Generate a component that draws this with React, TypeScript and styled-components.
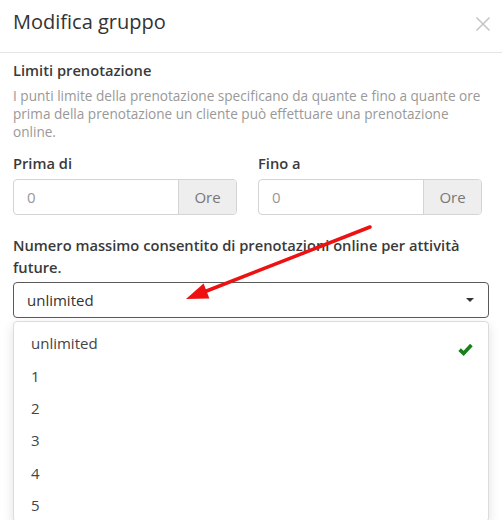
import React from "react";
import styled, { createGlobalStyle } from "styled-components";

const Global = createGlobalStyle`
  html, body { margin: 0; padding: 0; background: #fff; }
  body { font-family: "Open Sans", "Noto Sans", sans-serif; color: #333; overflow: hidden; }
  * { box-sizing: border-box; }
`;

const Page = styled.div`
  position: relative;
  width: 502px;
  height: 520px;
  overflow: hidden;
  background: #fff;
`;

const Header = styled.div`
  height: 53px;
  padding: 9px 13px 0;
  border-bottom: 1px solid #e4e4e4;
  display: flex;
  justify-content: space-between;
  align-items: flex-start;
`;

const Title = styled.h1`
  margin: 0;
  font-size: 20px;
  line-height: 26px;
  font-weight: 400;
  color: #333;
`;

const Close = styled.button`
  border: 0;
  background: none;
  padding: 0;
  margin: 7px -2px 0 0;
  width: 16px;
  height: 16px;
  display: flex;
`;

const Body = styled.div`
  padding: 7px 13px 0;
`;

const Heading = styled.div`
  font-size: 14.7px;
  line-height: 20px;
  font-weight: 600;
  color: #3a3a3a;
`;

const Desc = styled.p`
  margin: 7px 0 0;
  font-size: 13.6px;
  line-height: 18px;
  color: #999;
`;

const Row = styled.div`
  display: grid;
  grid-template-columns: 224px 224px;
  column-gap: 21px;
  margin-top: 12px;
`;

const Label = styled.div`
  font-size: 14.7px;
  line-height: 20px;
  font-weight: 600;
  color: #3a3a3a;
`;

const InputGroup = styled.div`
  margin-top: 6px;
  display: flex;
  height: 36px;
  border: 1px solid #d4d4d4;
  border-radius: 4px;
  overflow: hidden;
`;

const InputValue = styled.div`
  flex: 1;
  padding-left: 13px;
  display: flex;
  align-items: center;
  font-size: 15px;
  color: #999;
`;

const Addon = styled.div`
  width: 58px;
  background: #eee;
  border-left: 1px solid #d4d4d4;
  display: flex;
  align-items: center;
  justify-content: center;
  font-size: 15px;
  color: #777;
`;

const LongLabel = styled(Label)`
  margin-top: 19px;
  line-height: 22px;
`;

const Select = styled.div`
  margin-top: 4px;
  height: 36px;
  border: 1px solid #5a5a5a;
  border-radius: 4px;
  display: flex;
  align-items: center;
  justify-content: space-between;
  padding: 0 14px 0 13px;
  font-size: 15px;
  color: #333;
`;

const Caret = styled.span`
  width: 0;
  height: 0;
  border-left: 4px solid transparent;
  border-right: 4px solid transparent;
  border-top: 4px solid #333;
`;

const Menu = styled.ul`
  list-style: none;
  margin: 3px 0 0;
  padding: 5px 0 0;
  border: 1px solid #dcdcdc;
  border-radius: 4px;
  background: #fff;
  box-shadow: 0 4px 12px rgba(0, 0, 0, 0.12);
`;

const Item = styled.li`
  height: 32.4px;
  padding: 0 15px 0 17px;
  display: flex;
  align-items: center;
  justify-content: space-between;
  font-size: 15px;
  color: #444;
`;

const Check = styled.svg`
  margin-top: 12px;
`;

const Arrow = styled.svg`
  position: absolute;
  left: 0;
  top: 0;
  pointer-events: none;
`;

const items = ["unlimited", "1", "2", "3", "4", "5"];

export default function App() {
  return (
    <Page>
      <Global />
      <Header>
        <Title>Modifica gruppo</Title>
        <Close aria-label="Chiudi">
          <svg width="16" height="16" viewBox="0 0 16 16">
            <path d="M1.5 1.5 L14.5 14.5 M14.5 1.5 L1.5 14.5" stroke="#c4c4c4" strokeWidth="1.5" fill="none" />
          </svg>
        </Close>
      </Header>
      <Body>
        <Heading>Limiti prenotazione</Heading>
        <Desc>
          I punti limite della prenotazione specificano da quante e fino a quante ore prima della
          prenotazione un cliente può effettuare una prenotazione online.
        </Desc>
        <Row>
          <div>
            <Label>Prima di</Label>
            <InputGroup>
              <InputValue>0</InputValue>
              <Addon>Ore</Addon>
            </InputGroup>
          </div>
          <div>
            <Label>Fino a</Label>
            <InputGroup>
              <InputValue>0</InputValue>
              <Addon>Ore</Addon>
            </InputGroup>
          </div>
        </Row>
        <LongLabel>Numero massimo consentito di prenotazioni online per attività future.</LongLabel>
        <Select>
          <span>unlimited</span>
          <Caret />
        </Select>
        <Menu>
          {items.map((it, i) => (
            <Item key={it}>
              <span>{it}</span>
              {i === 0 && (
                <Check width="15" height="13" viewBox="0 0 15 13">
                  <path d="M1.6 6.6 L5.6 10.4 L13.4 2" stroke="#17801a" strokeWidth="3.6" fill="none" strokeLinejoin="miter" />
                </Check>
              )}
            </Item>
          ))}
        </Menu>
      </Body>
      <Arrow width="502" height="520" viewBox="0 0 502 520">
        <line x1="370" y1="227" x2="204" y2="292" stroke="#ee1111" strokeWidth="3.5" strokeLinecap="round" />
        <polygon points="186,299 203.6,283.6 209.4,298.4" fill="#ee1111" />
      </Arrow>
    </Page>
  );
}
